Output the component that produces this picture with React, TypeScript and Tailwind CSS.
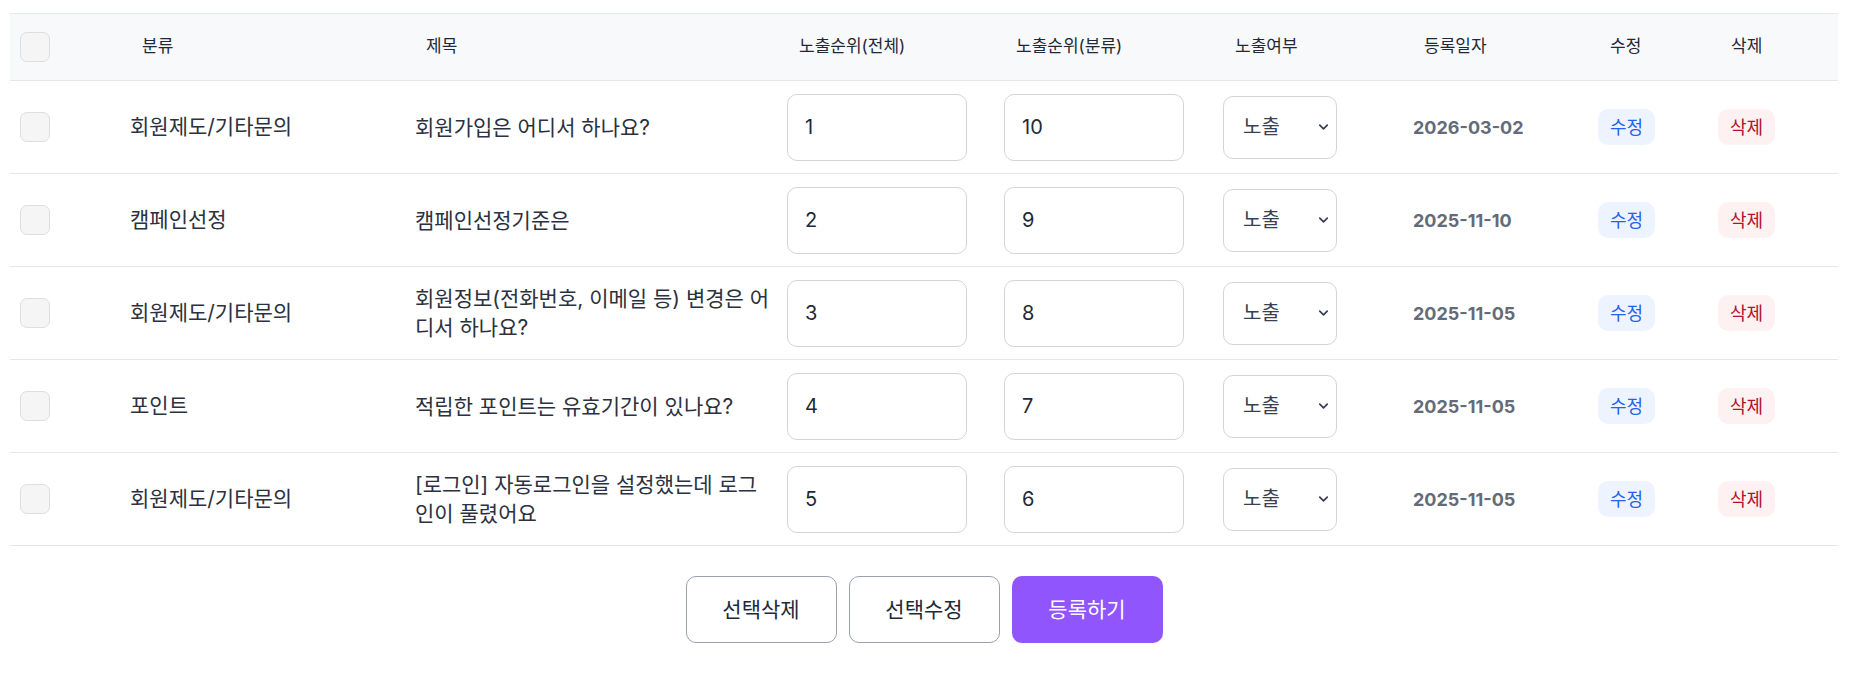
import { ChevronDown } from "lucide-react";

type Row = {
  category: string;
  title: string;
  orderAll: string;
  orderCat: string;
  date: string;
};

const rows: Row[] = [
  { category: "회원제도/기타문의", title: "회원가입은 어디서 하나요?", orderAll: "1", orderCat: "10", date: "2026-03-02" },
  { category: "캠페인선정", title: "캠페인선정기준은", orderAll: "2", orderCat: "9", date: "2025-11-10" },
  { category: "회원제도/기타문의", title: "회원정보(전화번호, 이메일 등) 변경은 어디서 하나요?", orderAll: "3", orderCat: "8", date: "2025-11-05" },
  { category: "포인트", title: "적립한 포인트는 유효기간이 있나요?", orderAll: "4", orderCat: "7", date: "2025-11-05" },
  { category: "회원제도/기타문의", title: "[로그인] 자동로그인을 설정했는데 로그인이 풀렸어요", orderAll: "5", orderCat: "6", date: "2025-11-05" },
];

const cols =
  "grid grid-cols-[110px_285px_372px_217px_219px_190px_185px_120px_130px] items-center";

function Checkbox() {
  return (
    <div className="w-[30px] h-[30px] rounded-[7px] bg-[#f5f5f5] border border-[#dedede]" />
  );
}

export default function App() {
  return (
    <div
      className="min-h-[675px] bg-white pt-[13px] pl-[10px]"
      style={{ fontFamily: "Inter, 'Noto Sans CJK KR', sans-serif" }}
    >
      <div className="w-[1828px]">
        {/* header */}
        <div className={`${cols} h-[68px] bg-[#f8f9fb] border-y border-[#e5e7eb] text-[17px] text-[#1f2937]`}>
          <div className="pl-[10px]">
            <Checkbox />
          </div>
          <div className="pl-[22px]">분류</div>
          <div className="pl-[21px]">제목</div>
          <div className="pl-[22px]">노출순위(전체)</div>
          <div className="pl-[22px]">노출순위(분류)</div>
          <div className="pl-[22px]">노출여부</div>
          <div className="pl-[21px]">등록일자</div>
          <div className="pl-[22px]">수정</div>
          <div className="pl-[23px]">삭제</div>
        </div>

        {/* rows */}
        {rows.map((row, index) => (
          <div
            key={index}
            className={`${cols} h-[93px] border-b border-[#e5e7eb] text-[21px] text-[#2b3140]`}
          >
            <div className="pl-[10px]">
              <Checkbox />
            </div>
            <div className="pl-[10px]">{row.category}</div>
            <div className="pl-[10px] pr-[3px] leading-[29px]">{row.title}</div>
            <div className="pl-[10px]">
              <input
                type="text"
                defaultValue={row.orderAll}
                className="w-[180px] h-[67px] rounded-[10px] border border-[#d1d5db] px-[17px] text-[20px] text-[#1f2937] outline-none"
              />
            </div>
            <div className="pl-[10px]">
              <input
                type="text"
                defaultValue={row.orderCat}
                className="w-[180px] h-[67px] rounded-[10px] border border-[#d1d5db] px-[17px] text-[20px] text-[#1f2937] outline-none"
              />
            </div>
            <div className="pl-[10px]">
              <div className="relative w-[114px] h-[63px]">
                <select
                  defaultValue="Y"
                  className="appearance-none w-full h-full rounded-[10px] border border-[#d1d5db] bg-white pl-[19px] text-[20px] text-[#374151] outline-none"
                >
                  <option value="Y">노출</option>
                  <option value="N">미노출</option>
                </select>
                <ChevronDown
                  size={15}
                  strokeWidth={2.75}
                  className="absolute right-[6px] top-1/2 -translate-y-1/2 text-[#374151] pointer-events-none"
                />
              </div>
            </div>
            <div className="pl-[10px] text-[18px] font-bold text-[#646b78]">{row.date}</div>
            <div className="pl-[10px]">
              <button className="h-[36px] px-[12px] rounded-[10px] bg-[#eef4ff] text-[18px] text-[#2563eb]">
                수정
              </button>
            </div>
            <div className="pl-[10px]">
              <button className="h-[36px] px-[12px] rounded-[10px] bg-[#fef1f2] text-[18px] text-[#b0132f]">
                삭제
              </button>
            </div>
          </div>
        ))}

        {/* actions */}
        <div className="flex justify-center gap-[12px] pt-[30px] text-[21px]">
          <button className="w-[151px] h-[67px] rounded-[10px] border border-[#9aa1ae] bg-white text-[#1f2937]">
            선택삭제
          </button>
          <button className="w-[151px] h-[67px] rounded-[10px] border border-[#9aa1ae] bg-white text-[#1f2937]">
            선택수정
          </button>
          <button className="w-[151px] h-[67px] rounded-[10px] bg-[#9155fd] text-white">
            등록하기
          </button>
        </div>
      </div>
    </div>
  );
}
